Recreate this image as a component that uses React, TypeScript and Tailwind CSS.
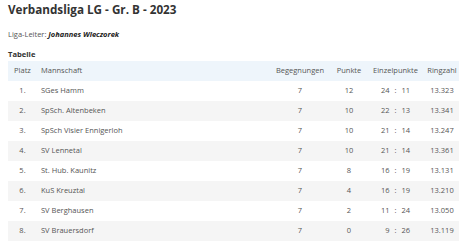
import React from "react";

type Row = {
  platz: number;
  team: string;
  games: number;
  points: number;
  won: number;
  lost: number;
  rings: string;
};

const rows: Row[] = [
  { platz: 1, team: "SGes Hamm", games: 7, points: 12, won: 24, lost: 11, rings: "13.323" },
  { platz: 2, team: "SpSch. Altenbeken", games: 7, points: 10, won: 22, lost: 13, rings: "13.341" },
  { platz: 3, team: "SpSch Visier Ennigerloh", games: 7, points: 10, won: 21, lost: 14, rings: "13.247" },
  { platz: 4, team: "SV Lennetal", games: 7, points: 10, won: 21, lost: 14, rings: "13.361" },
  { platz: 5, team: "St. Hub. Kaunitz", games: 7, points: 8, won: 16, lost: 19, rings: "13.131" },
  { platz: 6, team: "KuS Kreuztal", games: 7, points: 4, won: 16, lost: 19, rings: "13.210" },
  { platz: 7, team: "SV Berghausen", games: 7, points: 2, won: 11, lost: 24, rings: "13.050" },
  { platz: 8, team: "SV Brauersdorf", games: 7, points: 0, won: 9, lost: 26, rings: "13.119" },
];

export default function App() {
  return (
    <div className="min-h-screen bg-white px-2 pt-[1px] font-['Open_Sans',sans-serif] text-[#555]">
      <h1 className="text-[11.7px] font-bold leading-[16px] text-[#333]">
        Verbandsliga LG - Gr. B - 2023
      </h1>
      <p className="mt-[11px] text-[7.5px] leading-[12px]">
        Liga-Leiter: <b className="italic text-[#222]">Johannes Wieczorek</b>
      </p>
      <h2 className="mt-[8px] text-[7.6px] font-bold leading-[12px] text-[#333]">Tabelle</h2>

      <table className="mt-[1px] w-[451px] table-fixed border-collapse text-[7.5px]">
        <colgroup>
          <col className="w-[29px]" />
          <col />
          <col className="w-[64px]" />
          <col className="w-[34px]" />
          <col className="w-[59px]" />
          <col className="w-[34px]" />
        </colgroup>
        <thead>
          <tr className="h-[20px] bg-[#eef5fb]">
            <th className="text-center font-normal">Platz</th>
            <th className="pl-[4px] text-left font-normal">Mannschaft</th>
            <th className="text-center font-normal">Begegnungen</th>
            <th className="text-center font-normal">Punkte</th>
            <th className="text-center font-normal">Einzelpunkte</th>
            <th className="text-center font-normal">Ringzahl</th>
          </tr>
        </thead>
        <tbody>
          {rows.map((row) => (
            <tr
              key={row.platz}
              className={row.platz % 2 === 0 ? "h-[20px] bg-[#f5f5f5]" : "h-[20px]"}
            >
              <td className="text-center">{row.platz}.</td>
              <td className="pl-[4px]">{row.team}</td>
              <td className="text-center">{row.games}</td>
              <td className="text-center">{row.points}</td>
              <td>
                <div className="flex justify-center">
                  <span className="w-[10px] text-right">{row.won}</span>
                  <span className="w-[12px] text-center">:</span>
                  <span className="w-[10px] text-left">{row.lost}</span>
                </div>
              </td>
              <td className="text-center">{row.rings}</td>
            </tr>
          ))}
        </tbody>
      </table>
    </div>
  );
}
